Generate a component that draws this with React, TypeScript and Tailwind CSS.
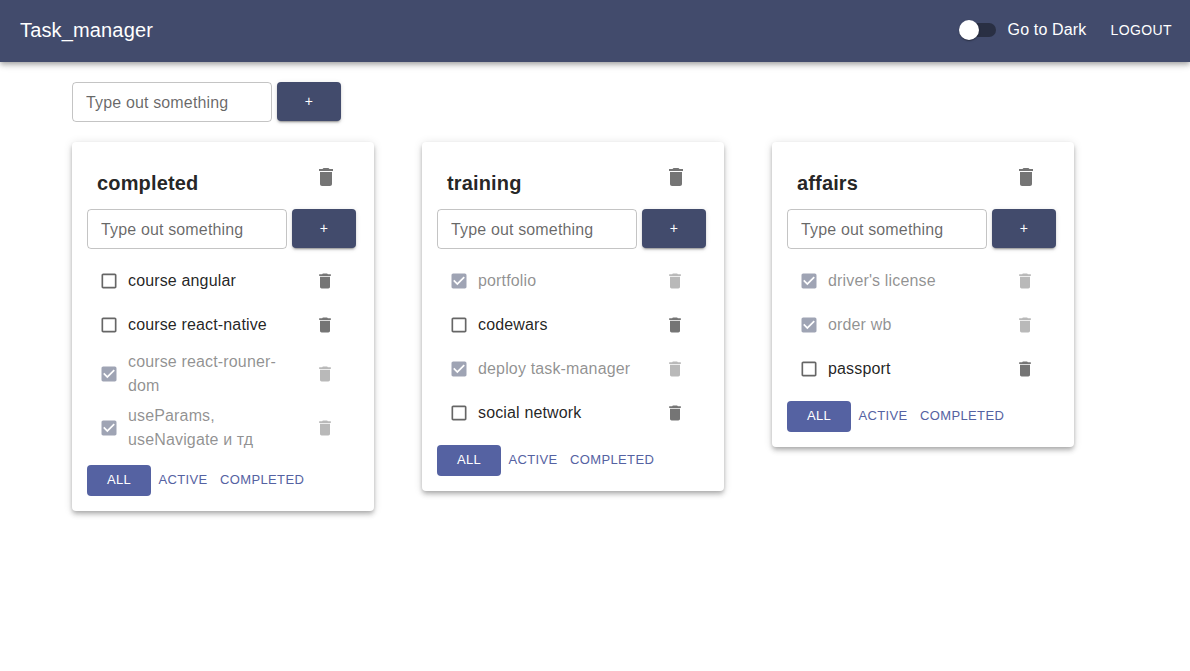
type Task = { title: string; done?: boolean };
type Board = { name: string; tasks: Task[] };

const boards: Board[] = [
  {
    name: 'completed',
    tasks: [
      { title: 'course angular' },
      { title: 'course react-native' },
      { title: 'course react-rouner-dom', done: true },
      { title: 'useParams, useNavigate и тд', done: true },
    ],
  },
  {
    name: 'training',
    tasks: [
      { title: 'portfolio', done: true },
      { title: 'codewars' },
      { title: 'deploy task-manager', done: true },
      { title: 'social network' },
    ],
  },
  {
    name: 'affairs',
    tasks: [
      { title: "driver's license", done: true },
      { title: 'order wb', done: true },
      { title: 'passport' },
    ],
  },
];

function TrashIcon({ className }: { className: string }) {
  return (
    <svg viewBox="0 0 24 24" className={className} fill="currentColor">
      <path d="M6 19c0 1.1.9 2 2 2h8c1.1 0 2-.9 2-2V7H6v12zM19 4h-3.5l-1-1h-5l-1 1H5v2h14V4z" />
    </svg>
  );
}

function CheckIcon({ checked }: { checked?: boolean }) {
  return (
    <svg
      viewBox="0 0 24 24"
      className={checked ? 'size-5 text-[#424b6c]' : 'size-5 text-black/60'}
      fill="currentColor"
    >
      {checked ? (
        <path d="M19 3H5c-1.11 0-2 .9-2 2v14c0 1.1.89 2 2 2h14c1.11 0 2-.9 2-2V5c0-1.1-.89-2-2-2zm-9 14l-5-5 1.41-1.41L10 14.17l7.59-7.59L19 8l-9 9z" />
      ) : (
        <path d="M19 5v14H5V5h14m0-2H5c-1.1 0-2 .9-2 2v14c0 1.1.9 2 2 2h14c1.1 0 2-.9 2-2V5c0-1.1-.9-2-2-2z" />
      )}
    </svg>
  );
}

function AddItem() {
  return (
    <div className="flex items-start gap-[5px]">
      <input
        placeholder="Type out something"
        className="h-10 w-[200px] rounded border border-black/23 bg-transparent px-[13px] pt-[2px] text-base tracking-[0.15px] placeholder:text-black/60 outline-none"
      />
      <button className="h-[39px] w-16 rounded bg-[#424b6c] pb-px text-sm font-medium tracking-[0.4px] text-white shadow-[0_3px_1px_-2px_rgba(0,0,0,0.2),0_2px_2px_0_rgba(0,0,0,0.14),0_1px_5px_0_rgba(0,0,0,0.12)]">
        +
      </button>
    </div>
  );
}

function BoardCard({ board }: { board: Board }) {
  return (
    <section className="w-[302px] rounded bg-white p-[15px] shadow-[0_2px_4px_-1px_rgba(0,0,0,0.2),0_4px_5px_0_rgba(0,0,0,0.14),0_1px_10px_0_rgba(0,0,0,0.12)]">
      <header className="flex h-[52px] items-start justify-between pr-[21px] pl-[10px]">
        <h3 className="pt-[10px] text-xl leading-8 font-bold tracking-[0.15px]">{board.name}</h3>
        <TrashIcon className="mt-2 size-6 text-black/54" />
      </header>
      <AddItem />
      <ul className="mt-[10px]">
        {board.tasks.map((task) => (
          <li
            key={task.title}
            className={`flex min-h-11 items-center py-[3px] pr-6 pl-3 ${task.done ? 'opacity-50' : ''}`}
          >
            <CheckIcon checked={task.done} />
            <span className="ml-[9px] w-[160px] text-base leading-6 tracking-[0.15px]">{task.title}</span>
            <TrashIcon className="ml-auto size-5 text-black/54" />
          </li>
        ))}
      </ul>
      <div className="mt-[10px] flex h-[31px] text-[13px] font-medium tracking-[0.37px] text-[#5562a2]">
        <button className="w-16 rounded bg-[#5562a2] pb-[2px] text-white">ALL</button>
        <button className="w-16 pb-[2px]">ACTIVE</button>
        <button className="px-[5px] pb-[2px]">COMPLETED</button>
      </div>
    </section>
  );
}

export default function App() {
  return (
    <div className="min-h-screen bg-white font-['Liberation_Sans',Arial,sans-serif] text-black/87">
      <header className="flex h-[62px] items-center bg-[#424b6c] pr-[18px] pb-[2px] pl-5 text-white shadow-[0_2px_4px_-1px_rgba(0,0,0,0.2),0_4px_5px_0_rgba(0,0,0,0.14),0_1px_10px_0_rgba(0,0,0,0.12)]">
        <h1 className="text-xl font-medium tracking-[0.15px]">Task_manager</h1>
        <div className="ml-auto flex items-center">
          <div className="flex h-3.5 w-[34px] items-center rounded-full bg-[#292f43]">
            <span className="-ml-[3px] size-5 rounded-full bg-white shadow-[0_2px_1px_-1px_rgba(0,0,0,0.2),0_1px_1px_0_rgba(0,0,0,0.14),0_1px_3px_0_rgba(0,0,0,0.12)]" />
          </div>
          <span className="ml-3 text-base tracking-[0.15px]">Go to Dark</span>
          <button className="ml-6 text-sm font-medium tracking-[0.4px]">LOGOUT</button>
        </div>
      </header>
      <main className="px-[72px] pt-5">
        <AddItem />
        <div className="mt-5 flex items-start gap-12">
          {boards.map((board) => (
            <BoardCard key={board.name} board={board} />
          ))}
        </div>
      </main>
    </div>
  );
}
